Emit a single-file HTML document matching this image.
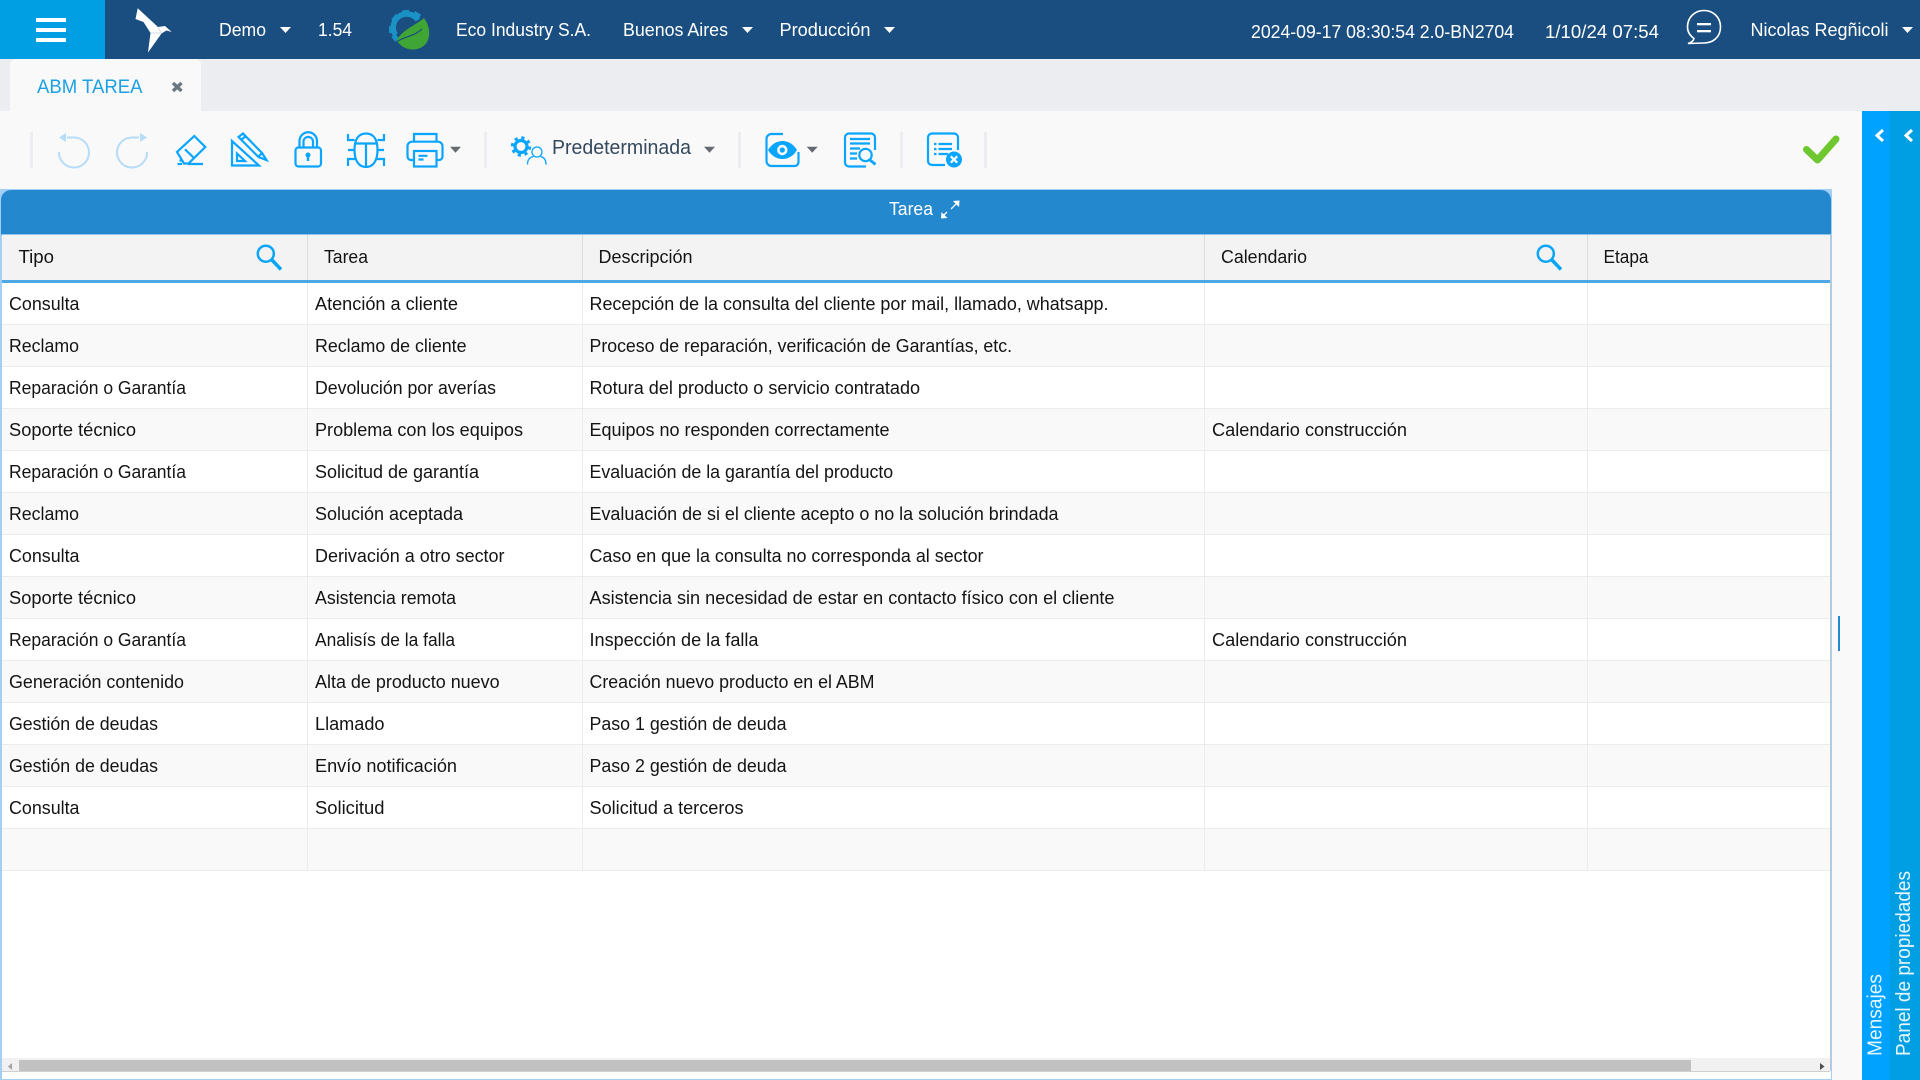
<!DOCTYPE html>
<html lang="es"><head><meta charset="utf-8"><title>ABM TAREA</title>
<style>
html,body{margin:0;padding:0;background:#f9f9f9;width:1920px;height:1080px;overflow:hidden}
svg{display:block}
text{font-family:"Liberation Sans",sans-serif;white-space:pre}
.t{font-size:18px;fill:#fff}
.h{font-size:18.3px;fill:#141414}
.c{font-size:18.3px;fill:#141414}
.i{fill:none;stroke:#0aa5ff;stroke-width:2.2}
.f{fill:#0aa5ff}
.g{fill:#ecedf1}
</style></head><body>
<svg xmlns="http://www.w3.org/2000/svg" width="1920" height="1080" viewBox="0 0 1920 1080">
<!-- top bar -->
<rect width="1920" height="59" fill="#1a4e80"/>
<rect width="105" height="59" fill="#009fe3"/>
<rect x="36" y="18" width="30" height="4" fill="#fff"/><rect x="36" y="28" width="30" height="4" fill="#fff"/><rect x="36" y="38" width="30" height="4" fill="#fff"/>
<path d="M137.7 8.3 L158 27 L165 26 L171.7 32 L166.5 30.5 L161.5 33.5 L148 52.5 L150.5 33 L143.5 22 L135.5 19 Z" fill="#fff"/>
<path d="M150.5 33 L161 33 M158 27 L161.5 33.5" stroke="#c5d3e0" stroke-width=".7" fill="none"/>
<!-- eco logo -->
<path d="M395.500 35 A13 13 0 0 1 418 20" fill="none" stroke="#1b92c6" stroke-width="5.500"/>
<g fill="#1b92c6">
<rect x="-3.500" y="-19" width="7" height="6" transform="translate(408,29) rotate(-8)"/>
<rect x="-3.500" y="-19" width="7" height="6" transform="translate(408,29) rotate(32)"/>
<rect x="-3.500" y="-19" width="7" height="6" transform="translate(408,29) rotate(-50)"/>
<rect x="-3.500" y="-19" width="7" height="6" transform="translate(408,29) rotate(-92)"/>
<rect x="-3" y="-18" width="6" height="5" transform="translate(408,29) rotate(-125)"/>
</g>
<path d="M397 40 C403 29 415 26 424 18 C433 30 431 49 413 49.500 C405 49.500 399 45 397 40 Z" fill="#3fa535"/>
<path d="M398 41 C406 36 415 36 422 29" fill="none" stroke="#1a4e80" stroke-width="1.200"/>
<text class="t" x="219" y="36" textLength="47" lengthAdjust="spacingAndGlyphs">Demo</text>
<path d="M280 27h11l-5.500 6z" fill="#fff"/>
<text class="t" x="318" y="36" textLength="34" lengthAdjust="spacingAndGlyphs">1.54</text>
<text class="t" x="456" y="36" textLength="135" lengthAdjust="spacingAndGlyphs">Eco Industry S.A.</text>
<text class="t" x="623" y="36" textLength="105" lengthAdjust="spacingAndGlyphs">Buenos Aires</text>
<path d="M742 27h11l-5.500 6z" fill="#fff"/>
<text class="t" x="779.500" y="36" textLength="91" lengthAdjust="spacingAndGlyphs">Producción</text>
<path d="M884 27h11l-5.500 6z" fill="#fff"/>
<text class="t" x="1251" y="38" textLength="263" lengthAdjust="spacingAndGlyphs">2024-09-17 08:30:54 2.0-BN2704</text>
<text class="t" x="1545" y="38" textLength="114" lengthAdjust="spacingAndGlyphs">1/10/24 07:54</text>
<path d="M1694 38.500 C1689 35 1687.500 31 1687.500 27 C1687.500 17 1695 10.500 1704 10.500 C1713 10.500 1720.500 17 1720.500 27 C1720.500 37 1713 43 1704 43 L1688 43.500 C1691 42.500 1693.500 41 1694 38.500 Z" fill="none" stroke="#fff" stroke-width="1.600"/>
<rect x="1697" y="23" width="14" height="2.300" fill="#fff"/><rect x="1697" y="30" width="14" height="2.300" fill="#fff"/>
<text class="t" x="1750.500" y="36" textLength="138" lengthAdjust="spacingAndGlyphs">Nicolas Regñicoli</text>
<path d="M1902 27h11l-5.500 6z" fill="#fff"/>

<!-- tab bar -->
<rect y="59" width="1920" height="52" fill="#ecedf1"/>
<path d="M10 113V65a6 6 0 0 1 6-6H195a6 6 0 0 1 6 6V113Z" fill="#f9f9f9"/>
<text x="37" y="93" font-size="19.500" fill="#1ba0e2" textLength="105.500" lengthAdjust="spacingAndGlyphs">ABM TAREA</text>
<path d="M173 83 L181.500 91 M181.500 83 L173 91" stroke="#6a7780" stroke-width="3.400" fill="none"/>

<!-- toolbar -->
<rect y="111" width="1862" height="78" fill="#f9f9f9"/>
<rect class="g" x="30" y="132" width="3" height="36"/><rect class="g" x="484" y="132" width="3" height="36"/><rect class="g" x="738" y="132" width="3" height="36"/><rect class="g" x="900" y="132" width="3" height="36"/><rect class="g" x="984" y="132" width="3" height="36"/>
<!-- undo / redo -->
<path d="M67 137.500 H74 A15 15 0 1 1 59 152" fill="none" stroke="#b6dcf8" stroke-width="2"/>
<path d="M59 137.500 L66 133 V142 Z" fill="#b6dcf8"/>
<path d="M139 137.500 H132 A15 15 0 1 0 147 152" fill="none" stroke="#b6dcf8" stroke-width="2"/>
<path d="M147 137.500 L140 133 V142 Z" fill="#b6dcf8"/>
<!-- eraser -->
<path class="i" d="M194.300 136 L205.300 147 L188.500 163.500 L184 163.500 L177 152 Z M185 149.300 L194.500 158.500"/>
<path class="i" d="M188 164 H203 M177.500 164 H182 M179.500 160 L182 161"/>
<!-- ruler & pencil -->
<path class="i" d="M232 141 V165.500 H259 Z M237 153.500 V161 H245 Z"/>
<path class="i" d="M238.500 137 L243 133.500 L262 153 L266.500 160 L258.500 157 Z M241 140 L246 136 M258 157 L262 153"/>
<!-- lock -->
<rect class="i" x="295.500" y="147.500" width="25.500" height="19" rx="3"/>
<path class="i" d="M299.500 147 V141 A8.700 8.700 0 0 1 317 141 V147 M303.500 147 V141 A4.800 4.800 0 0 1 313 141 V147"/>
<circle class="f" cx="308" cy="155" r="2.500"/><rect class="f" x="306.800" y="155" width="2.400" height="6"/>
<!-- bug -->
<path class="i" d="M366 133.500 C358 133.500 354.500 140 354.500 150 C354.500 161 359 167 366 167 C373 167 377.500 161 377.500 150 C377.500 140 374 133.500 366 133.500 Z M355 143.500 H377 M366 143.500 V167"/>
<path class="i" d="M348 134 V140 H354.500 M348 150 H354.500 M348 166 V159 H355 M384 134 V140 H377.500 M384 150 H377.500 M384 166 V159 H377"/>
<!-- printer -->
<path class="i" d="M414 141.500 V134 H436.500 V141.500"/>
<path class="i" d="M414 160 H411 A3.500 3.500 0 0 1 407.500 156.500 V146 A4.500 4.500 0 0 1 412 141.700 H438 A4.500 4.500 0 0 1 442.500 146 V156.500 A3.500 3.500 0 0 1 439 160 H436.500"/>
<rect class="i" x="414" y="151" width="22.500" height="15.500"/>
<path class="i" d="M418.500 155.800 H427.500 M418.500 159.500 H423.500"/>
<path d="M450 146.700h11l-5.500 6z" fill="#666b72"/>
<!-- gear user -->
<circle cx="521" cy="146.500" r="6" fill="none" stroke="#0aa5ff" stroke-width="3.200"/>
<circle cx="521" cy="146.500" r="8.800" fill="none" stroke="#0aa5ff" stroke-width="2.800" stroke-dasharray="3.200 3.710"/>
<circle cx="537" cy="152" r="5" fill="#f9f9f9" stroke="#0aa5ff" stroke-width="1.300"/>
<path d="M527.500 164.500 C527.500 159 530.500 157 533.500 156.500 M546 164.500 C546 159 543 157 540.500 156.500" fill="none" stroke="#0aa5ff" stroke-width="1.300"/>
<text x="552" y="154" font-size="20.300" fill="#34495e" textLength="139" lengthAdjust="spacingAndGlyphs">Predeterminada</text>
<path d="M704 146.700h11l-5.500 6z" fill="#666b72"/>
<!-- eye -->
<path class="i" d="M783 134 H771 A5 5 0 0 0 766.500 139 V161 A5 5 0 0 0 771 166 H794 A4 4 0 0 0 798.500 162 V152"/>
<path class="f" d="M768 150 C775 138 790 138 797 150 C790 162 775 162 768 150 Z"/>
<circle cx="782.300" cy="150" r="5.200" fill="#f9f9f9"/><circle class="f" cx="782.300" cy="150" r="2.600"/>
<path d="M806.700 146.700h11l-5.500 6z" fill="#666b72"/>
<!-- doc search -->
<path class="i" d="M866 166.500 H849 A4 4 0 0 1 845 162.500 V137.500 A4 4 0 0 1 849 133.500 H871 A4 4 0 0 1 875 137.500 V150"/>
<path class="i" d="M850 139 H870 M850 143.500 H870 M850 148.500 H860 M850 153.500 H857 M850 158.500 H857"/>
<circle class="i" cx="865.500" cy="155" r="6.200"/>
<path d="M870 160 L875.500 164.500" fill="none" stroke="#0aa5ff" stroke-width="2.800"/>
<!-- list x -->
<path class="i" d="M945 165 H932 A4 4 0 0 1 928 161 V137.500 A4 4 0 0 1 932 133.500 H954 A4 4 0 0 1 958 137.500 V150"/>
<path d="M934 144 h2.500 M934 149 h2.500 M934 154 h2.500 M938.500 144 H952 M938.500 149 H952 M938.500 154 H948" stroke="#0aa5ff" stroke-width="2.200" fill="none"/>
<circle class="f" cx="954" cy="159.500" r="8"/>
<path d="M950.800 156.300 L957.200 162.700 M957.200 156.300 L950.800 162.700" stroke="#fff" stroke-width="2.200"/>
<!-- check -->
<path d="M1806.500 149.500 L1817.500 160 L1836 139" fill="none" stroke="#6ec72f" stroke-width="7" stroke-linecap="round" stroke-linejoin="round"/>

<!-- right panels -->
<rect x="1862" y="111" width="28" height="969" fill="#00a2ff"/>
<rect x="1890" y="111" width="30" height="969" fill="#009fe3"/>
<path d="M1883 130 L1877 135.500 L1883 141" fill="none" stroke="#fff" stroke-width="3"/>
<path d="M1912 130 L1906 135.500 L1912 141" fill="none" stroke="#fff" stroke-width="3"/>
<text transform="translate(1881.500,1056) rotate(-90)" font-size="20" fill="#e6f6ff" textLength="82" lengthAdjust="spacingAndGlyphs">Mensajes</text>
<text transform="translate(1910,1056) rotate(-90)" font-size="20" fill="#e6f6ff" textLength="185" lengthAdjust="spacingAndGlyphs">Panel de propiedades</text>

<!-- table panel -->
<rect x="0" y="189" width="1832" height="891" fill="#a3cff5"/>
<rect x="2" y="234" width="1829" height="845" fill="#fff"/>
<path d="M1 200 A10 10 0 0 1 11 190 H1821 A10 10 0 0 1 1831 200 V234.500 H1 Z" fill="#2488cf"/>
<text x="889" y="215" font-size="18" fill="#fff" textLength="44" lengthAdjust="spacingAndGlyphs">Tarea</text>
<path d="M942 217 L947 212 M951 209 L958 202" fill="none" stroke="#fff" stroke-width="1.300"/>
<path d="M941 218.500 L941.500 212 L947.500 218 Z M959.500 200.500 L959 207 L953 201 Z" fill="#fff"/>
<!-- header row -->
<rect x="2" y="235" width="1828" height="45" fill="#f3f3f3"/>
<rect x="2" y="280" width="1828" height="3" fill="#4ea8e4"/>
<g fill="#dddddd"><rect x="307" y="235" width="1" height="45"/><rect x="582" y="235" width="1" height="45"/><rect x="1204" y="235" width="1" height="45"/><rect x="1587" y="235" width="1" height="45"/></g>
<text class="h" x="18.500" y="263" textLength="35.500" lengthAdjust="spacingAndGlyphs">Tipo</text>
<text class="h" x="324" y="263" textLength="44" lengthAdjust="spacingAndGlyphs">Tarea</text>
<text class="h" x="598.500" y="263" textLength="94" lengthAdjust="spacingAndGlyphs">Descripción</text>
<text class="h" x="1221" y="263" textLength="86" lengthAdjust="spacingAndGlyphs">Calendario</text>
<text class="h" x="1603.500" y="263" textLength="45" lengthAdjust="spacingAndGlyphs">Etapa</text>
<circle cx="265.800" cy="253.700" r="8" fill="none" stroke="#0aa5f5" stroke-width="2.500"/>
<path d="M271.500 259.500 L281 269.500" stroke="#0aa5f5" stroke-width="3.500" fill="none"/>
<circle cx="1545.800" cy="253.700" r="8" fill="none" stroke="#0aa5f5" stroke-width="2.500"/>
<path d="M1551.500 259.500 L1561 269.500" stroke="#0aa5f5" stroke-width="3.500" fill="none"/>
<!-- stripes -->
<g fill="#f9f9f9">
<rect x="2" y="325" width="1828" height="42"/><rect x="2" y="409" width="1828" height="42"/><rect x="2" y="493" width="1828" height="42"/><rect x="2" y="577" width="1828" height="42"/><rect x="2" y="661" width="1828" height="42"/><rect x="2" y="745" width="1828" height="42"/><rect x="2" y="829" width="1828" height="42"/>
</g>
<g fill="#ececec">
<rect x="2" y="324" width="1828" height="1"/><rect x="2" y="366" width="1828" height="1"/><rect x="2" y="408" width="1828" height="1"/><rect x="2" y="450" width="1828" height="1"/><rect x="2" y="492" width="1828" height="1"/><rect x="2" y="534" width="1828" height="1"/><rect x="2" y="576" width="1828" height="1"/><rect x="2" y="618" width="1828" height="1"/><rect x="2" y="660" width="1828" height="1"/><rect x="2" y="702" width="1828" height="1"/><rect x="2" y="744" width="1828" height="1"/><rect x="2" y="786" width="1828" height="1"/><rect x="2" y="828" width="1828" height="1"/><rect x="2" y="870" width="1828" height="1"/>
<rect x="307" y="283" width="1" height="587"/><rect x="582" y="283" width="1" height="587"/><rect x="1204" y="283" width="1" height="587"/><rect x="1587" y="283" width="1" height="587"/>
</g>
<!-- col 1 -->
<g>
<text class="c" x="9" y="310" textLength="70.500" lengthAdjust="spacingAndGlyphs">Consulta</text>
<text class="c" x="9" y="352" textLength="70" lengthAdjust="spacingAndGlyphs">Reclamo</text>
<text class="c" x="9" y="394" textLength="177" lengthAdjust="spacingAndGlyphs">Reparación o Garantía</text>
<text class="c" x="9" y="436" textLength="127" lengthAdjust="spacingAndGlyphs">Soporte técnico</text>
<text class="c" x="9" y="478" textLength="177" lengthAdjust="spacingAndGlyphs">Reparación o Garantía</text>
<text class="c" x="9" y="520" textLength="70" lengthAdjust="spacingAndGlyphs">Reclamo</text>
<text class="c" x="9" y="562" textLength="70.500" lengthAdjust="spacingAndGlyphs">Consulta</text>
<text class="c" x="9" y="604" textLength="127" lengthAdjust="spacingAndGlyphs">Soporte técnico</text>
<text class="c" x="9" y="646" textLength="177" lengthAdjust="spacingAndGlyphs">Reparación o Garantía</text>
<text class="c" x="9" y="688" textLength="175" lengthAdjust="spacingAndGlyphs">Generación contenido</text>
<text class="c" x="9" y="730" textLength="149" lengthAdjust="spacingAndGlyphs">Gestión de deudas</text>
<text class="c" x="9" y="772" textLength="149" lengthAdjust="spacingAndGlyphs">Gestión de deudas</text>
<text class="c" x="9" y="814" textLength="70.500" lengthAdjust="spacingAndGlyphs">Consulta</text>
</g>
<!-- col 2 -->
<g>
<text class="c" x="315" y="310" textLength="143" lengthAdjust="spacingAndGlyphs">Atención a cliente</text>
<text class="c" x="315" y="352" textLength="151.500" lengthAdjust="spacingAndGlyphs">Reclamo de cliente</text>
<text class="c" x="315" y="394" textLength="181" lengthAdjust="spacingAndGlyphs">Devolución por averías</text>
<text class="c" x="315" y="436" textLength="208" lengthAdjust="spacingAndGlyphs">Problema con los equipos</text>
<text class="c" x="315" y="478" textLength="164" lengthAdjust="spacingAndGlyphs">Solicitud de garantía</text>
<text class="c" x="315" y="520" textLength="148" lengthAdjust="spacingAndGlyphs">Solución aceptada</text>
<text class="c" x="315" y="562" textLength="189.500" lengthAdjust="spacingAndGlyphs">Derivación a otro sector</text>
<text class="c" x="315" y="604" textLength="141" lengthAdjust="spacingAndGlyphs">Asistencia remota</text>
<text class="c" x="315" y="646" textLength="140" lengthAdjust="spacingAndGlyphs">Analisís de la falla</text>
<text class="c" x="315" y="688" textLength="184.600" lengthAdjust="spacingAndGlyphs">Alta de producto nuevo</text>
<text class="c" x="315" y="730" textLength="69.500" lengthAdjust="spacingAndGlyphs">Llamado</text>
<text class="c" x="315" y="772" textLength="142" lengthAdjust="spacingAndGlyphs">Envío notificación</text>
<text class="c" x="315" y="814" textLength="69.500" lengthAdjust="spacingAndGlyphs">Solicitud</text>
</g>
<!-- col 3 -->
<g>
<text class="c" x="589.500" y="310" textLength="519" lengthAdjust="spacingAndGlyphs">Recepción de la consulta del cliente por mail, llamado, whatsapp.</text>
<text class="c" x="589.500" y="352" textLength="422.500" lengthAdjust="spacingAndGlyphs">Proceso de reparación, verificación de Garantías, etc.</text>
<text class="c" x="589.500" y="394" textLength="330.600" lengthAdjust="spacingAndGlyphs">Rotura del producto o servicio contratado</text>
<text class="c" x="589.500" y="436" textLength="300" lengthAdjust="spacingAndGlyphs">Equipos no responden correctamente</text>
<text class="c" x="589.500" y="478" textLength="303.700" lengthAdjust="spacingAndGlyphs">Evaluación de la garantía del producto</text>
<text class="c" x="589.500" y="520" textLength="469" lengthAdjust="spacingAndGlyphs">Evaluación de si el cliente acepto o no la solución brindada</text>
<text class="c" x="589.500" y="562" textLength="394" lengthAdjust="spacingAndGlyphs">Caso en que la consulta no corresponda al sector</text>
<text class="c" x="589.500" y="604" textLength="525" lengthAdjust="spacingAndGlyphs">Asistencia sin necesidad de estar en contacto físico con el cliente</text>
<text class="c" x="589.500" y="646" textLength="169" lengthAdjust="spacingAndGlyphs">Inspección de la falla</text>
<text class="c" x="589.500" y="688" textLength="285" lengthAdjust="spacingAndGlyphs">Creación nuevo producto en el ABM</text>
<text class="c" x="589.500" y="730" textLength="197" lengthAdjust="spacingAndGlyphs">Paso 1 gestión de deuda</text>
<text class="c" x="589.500" y="772" textLength="197" lengthAdjust="spacingAndGlyphs">Paso 2 gestión de deuda</text>
<text class="c" x="589.500" y="814" textLength="154" lengthAdjust="spacingAndGlyphs">Solicitud a terceros</text>
</g>
<text class="c" x="1212" y="436" textLength="195" lengthAdjust="spacingAndGlyphs">Calendario construcción</text>
<text class="c" x="1212" y="646" textLength="195" lengthAdjust="spacingAndGlyphs">Calendario construcción</text>
<!-- right edge -->
<rect x="1830" y="235" width="1" height="836" fill="#c6c6c6"/>
<!-- marker -->
<rect x="1838" y="616" width="2" height="35" fill="#2488cf"/>
<!-- scrollbar -->
<rect x="2" y="1058" width="1828" height="13" fill="#f1f1f1"/>
<rect x="19" y="1060" width="1672" height="11" fill="#c1c1c1"/>
<rect x="2" y="1071" width="1828" height="1" fill="#d0d0d0"/>
<path d="M12 1063 V1070 L8 1066.500 Z" fill="#a3a3a3"/>
<path d="M1820 1063 V1070 L1824.500 1066.500 Z" fill="#505050"/>
</svg>
</body></html>
